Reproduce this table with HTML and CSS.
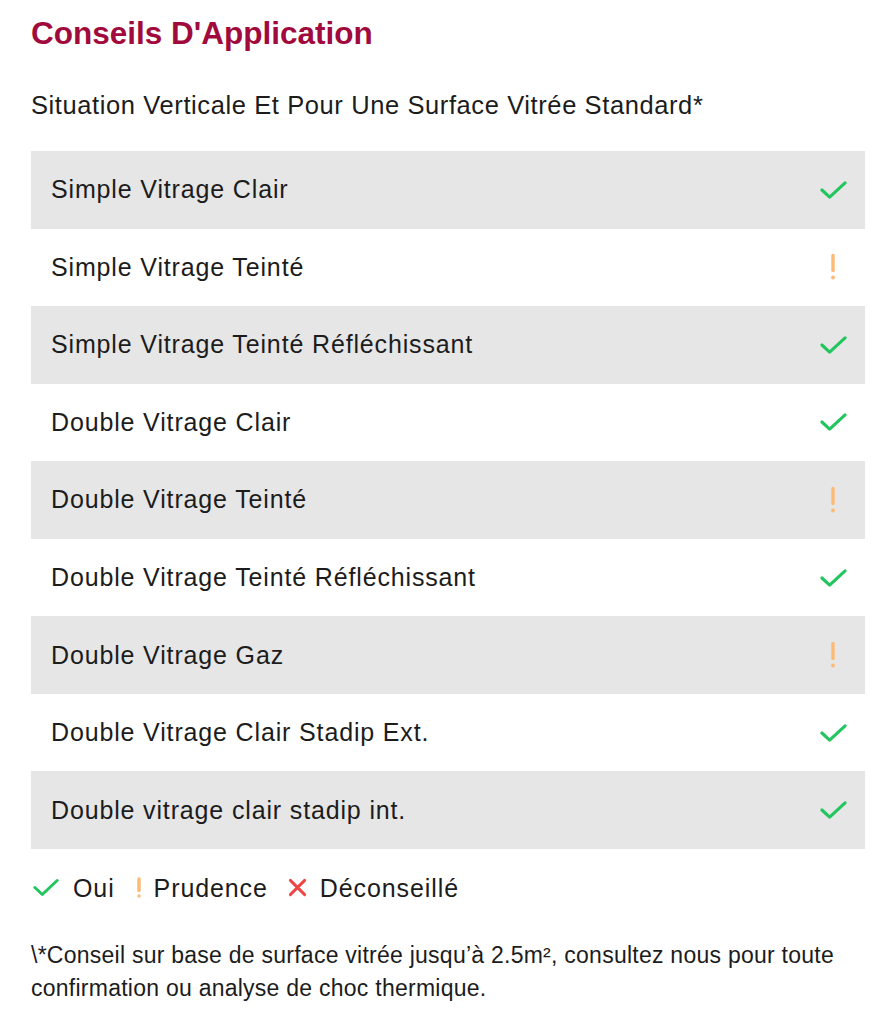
FILE: index.html
```html
<!DOCTYPE html>
<html lang="fr">
<head>
<meta charset="utf-8">
<link rel="stylesheet" href="styles.css">
</head>
<body>
<main class="page">
  <h1 class="title">Conseils D'Application</h1>
  <p class="subtitle">Situation Verticale Et Pour Une Surface Vitrée Standard*</p>
  <div class="table">
    <div class="row shade"><span>Simple Vitrage Clair</span><svg class="ic ok" viewBox="0 0 28 20"><path d="M2 10l8 7.5L26 2.5"/></svg></div>
    <div class="row"><span>Simple Vitrage Teinté</span><svg class="ic warn" viewBox="0 0 28 28"><path d="M14 2.5v15"/><circle cx="14" cy="24.5" r="1.9"/></svg></div>
    <div class="row shade"><span>Simple Vitrage Teinté Réfléchissant</span><svg class="ic ok" viewBox="0 0 28 20"><path d="M2 10l8 7.5L26 2.5"/></svg></div>
    <div class="row"><span>Double Vitrage Clair</span><svg class="ic ok" viewBox="0 0 28 20"><path d="M2 10l8 7.5L26 2.5"/></svg></div>
    <div class="row shade"><span>Double Vitrage Teinté</span><svg class="ic warn" viewBox="0 0 28 28"><path d="M14 2.5v15"/><circle cx="14" cy="24.5" r="1.9"/></svg></div>
    <div class="row"><span>Double Vitrage Teinté Réfléchissant</span><svg class="ic ok" viewBox="0 0 28 20"><path d="M2 10l8 7.5L26 2.5"/></svg></div>
    <div class="row shade"><span>Double Vitrage Gaz</span><svg class="ic warn" viewBox="0 0 28 28"><path d="M14 2.5v15"/><circle cx="14" cy="24.5" r="1.9"/></svg></div>
    <div class="row"><span>Double Vitrage Clair Stadip Ext.</span><svg class="ic ok" viewBox="0 0 28 20"><path d="M2 10l8 7.5L26 2.5"/></svg></div>
    <div class="row shade"><span>Double vitrage clair stadip int.</span><svg class="ic ok" viewBox="0 0 28 20"><path d="M2 10l8 7.5L26 2.5"/></svg></div>
  </div>
  <div class="legend">
    <span class="item"><svg class="ic ok" viewBox="0 0 28 20"><path d="M2 10l8 7.5L26 2.5"/></svg>Oui</span>
    <span class="item"><svg class="ic warn small" viewBox="0 0 8 22"><path d="M4 2v11.5"/><circle cx="4" cy="19" r="1.7"/></svg>Prudence</span>
    <span class="item"><svg class="ic no" viewBox="0 0 20 20"><path d="M2.5 2.5l15 15M17.5 2.5l-15 15"/></svg>Déconseillé</span>
  </div>
  <p class="note">\*Conseil sur base de surface vitrée jusqu’à 2.5m², consultez nous pour toute confirmation ou analyse de choc thermique.</p>
</main>
</body>
</html>
```
FILE: styles.css
```css
* { box-sizing: border-box; }
html, body { margin: 0; padding: 0; background: #fff; }
body {
  font-family: "Liberation Sans", Arial, sans-serif;
  color: #1c1c1c;
}
.page {
  padding: 15px 18px 0 31px;
}
.title {
  margin: 0;
  font-size: 31.5px;
  line-height: 36px;
  font-weight: bold;
  color: #a10a3c;
}
.subtitle {
  margin: 0;
  padding-top: 39px;
  font-size: 25.5px;
  line-height: 30px;
  letter-spacing: 0.6px;
}
.table {
  margin-top: 31px;
  display: flex;
  flex-direction: column;
}
.row {
  height: 77.55px;
  display: flex;
  align-items: center;
  justify-content: space-between;
  padding: 0 18px 0 20px;
  font-size: 25px;
  letter-spacing: 0.85px;
}
.row.shade { background: #e6e6e6; }
.ic { display: block; fill: none; stroke-linecap: round; stroke-linejoin: round; }
.ic.ok { width: 27px; height: 20px; stroke: #22c55e; stroke-width: 3.2; }
.ic.warn { width: 28px; height: 28px; stroke: #fdba74; stroke-width: 3.4; }
.ic.warn circle { fill: #fdba74; stroke: none; }
.ic.no { width: 19px; height: 19px; stroke: #ef4444; stroke-width: 3; }
.legend {
  display: flex;
  align-items: center;
  gap: 20px;
  margin-top: 24px;
  font-size: 25px;
  line-height: 30px;
  letter-spacing: 0.9px;
}
.legend .item { display: flex; align-items: center; gap: 14px; }
.legend .ic.ok { width: 26px; height: 19px; margin-left: 2px; }
.legend .ic.warn.small { width: 8px; height: 22px; }
.legend .item:nth-child(2) { gap: 11px; }
.legend .item:nth-child(3) { gap: 13px; }
.note {
  margin: 36px 0 0;
  font-size: 23px;
  line-height: 33px;
  letter-spacing: 0.25px;
}
```
